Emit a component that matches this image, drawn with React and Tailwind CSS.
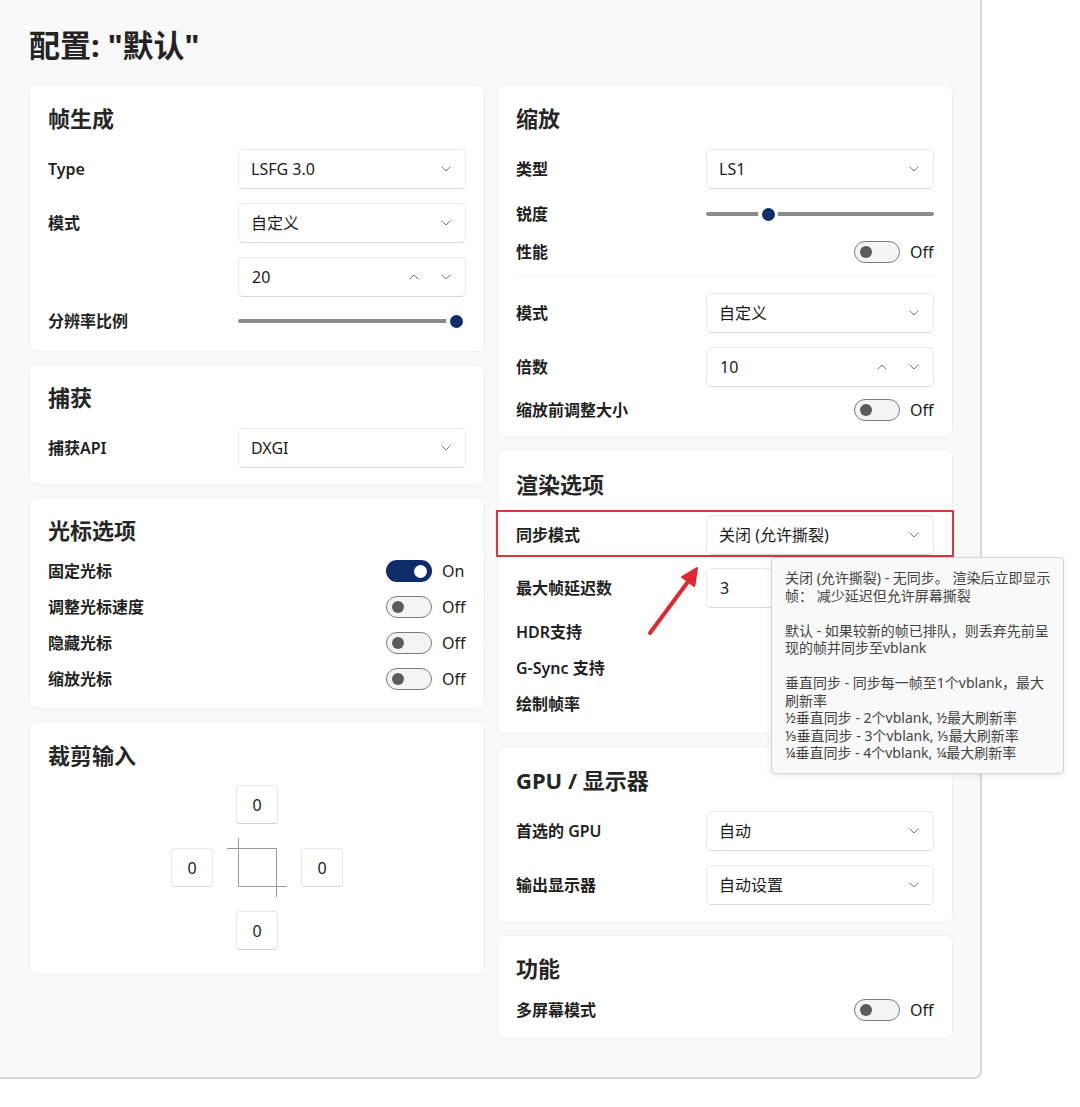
import React from "react";

function Chevron({ up }) {
  return (
    <svg width="10" height="6" viewBox="0 0 10 6" fill="none" stroke="#7a7a7a" strokeWidth="1" strokeLinecap="round" strokeLinejoin="round">
      <path d={up ? "M1 5 5 1l4 4" : "M1 1l4 4 4-4"} />
    </svg>
  );
}

function Combo({ value }) {
  return (
    <div className="flex h-[40px] w-[228px] items-center justify-between rounded-[5px] border border-[#e9e9e9] border-b-[#d6d6d6] bg-white pl-[12px] pr-[14px] text-[16px] text-[#1b1b1b]">
      <span>{value}</span>
      <Chevron />
    </div>
  );
}

function NumberBox({ value }) {
  return (
    <div className="flex h-[40px] w-[228px] items-center justify-between rounded-[5px] border border-[#e9e9e9] border-b-[#d6d6d6] bg-white pl-[13px] pr-[14px] text-[16px] text-[#1b1b1b]">
      <span>{value}</span>
      <div className="flex items-center gap-[22px]">
        <Chevron up />
        <Chevron />
      </div>
    </div>
  );
}

function Slider({ knob }) {
  return (
    <div className="relative h-[24px] w-[228px]">
      <div className="absolute left-0 right-0 top-[10px] h-[4px] rounded-full bg-[#8b8b8b]" />
      <div className={`absolute top-[2px] flex h-[20px] w-[20px] items-center justify-center rounded-full bg-white ${knob}`}>
        <div className="h-[13px] w-[13px] rounded-full bg-[#0f2d6b]" />
      </div>
    </div>
  );
}

function Toggle({ on }) {
  return (
    <div className="flex items-center">
      {on ? (
        <div className="flex h-[22px] w-[46px] items-center justify-end rounded-full bg-[#0f2d6b] pr-[5px]">
          <div className="h-[13px] w-[13px] rounded-full bg-white" />
        </div>
      ) : (
        <div className="flex h-[22px] w-[46px] items-center rounded-full border border-[#7c7c7c] bg-[#f4f4f4] pl-[5px]">
          <div className="h-[12px] w-[12px] rounded-full bg-[#5b5b5b]" />
        </div>
      )}
      <span className="ml-[10px] w-[24px] text-[16px] text-[#1b1b1b]">{on ? "On" : "Off"}</span>
    </div>
  );
}

function Row({ label, className, children }) {
  return (
    <div className={`flex items-center justify-between ${className}`}>
      <span className="text-[16px] font-semibold text-[#1f1f1f]">{label}</span>
      {children}
    </div>
  );
}

function Card({ title, className, children }) {
  return (
    <div className={`relative rounded-[8px] border border-[#f1f1f1] bg-white px-[18px] ${className}`}>
      <h2 className="h-[32px] text-[22px] font-bold leading-[32px] text-[#262626]">{title}</h2>
      {children}
    </div>
  );
}

function CropIcon() {
  return (
    <svg width="42" height="39" viewBox="0 0 42 39" className="overflow-visible" fill="none" stroke="#9a9a9a" strokeWidth="1">
      <path d="M-9 0.5H40.5V49" />
      <path d="M2.5 -10V38.5H51" />
    </svg>
  );
}

function CropInput() {
  return (
    <div className="flex h-[39px] w-[42px] items-center justify-center rounded-[4px] border border-[#e6e6e6] border-b-[#d3d3d3] bg-white text-[16px] text-[#1b1b1b]">
      0
    </div>
  );
}

const tipLines = [
  "关闭 (允许撕裂) - 无同步。 渲染后立即显示",
  "帧： 减少延迟但允许屏幕撕裂",
  "",
  "默认 - 如果较新的帧已排队，则丢弃先前呈",
  "现的帧并同步至vblank",
  "",
  "垂直同步 - 同步每一帧至1个vblank，最大",
  "刷新率",
  "½垂直同步 - 2个vblank, ½最大刷新率",
  "⅓垂直同步 - 3个vblank, ⅓最大刷新率",
  "¼垂直同步 - 4个vblank, ¼最大刷新率",
];

export default function App() {
  return (
    <div className="h-[1107px] w-[1080px] overflow-hidden bg-white font-['Noto_Sans','Noto_Sans_CJK_SC',sans-serif] text-[#1b1b1b]">
      <div className="h-[1079px] w-[982px] rounded-br-[8px] border-b-2 border-r-2 border-[#d7d7d7] bg-[#f9f9f9] pl-[29px]">
        <h1 className="h-[84px] pl-[-1px] pt-[24px] text-[31px] font-bold leading-[42px] text-[#232323]">配置: "默认"</h1>

        <div className="flex gap-[12px]">
          {/* left column */}
          <div className="flex w-[456px] flex-col gap-[12px]">
            <Card title="帧生成" className="pb-[15px] pt-[17px]">
              <div className="mt-[15px] flex flex-col gap-[14px]">
                <Row label="Type" className="h-[40px]">
                  <Combo value="LSFG 3.0" />
                </Row>
                <Row label="模式" className="h-[40px]">
                  <Combo value="自定义" />
                </Row>
                <Row label="" className="h-[40px]">
                  <NumberBox value="20" />
                </Row>
              </div>
              <Row label="分辨率比例" className="mt-[9px] h-[30px]">
                <Slider knob="left-[208px]" />
              </Row>
            </Card>

            <Card title="捕获" className="pb-[16px] pt-[16px]">
              <Row label="捕获API" className="mt-[15px] h-[40px]">
                <Combo value="DXGI" />
              </Row>
            </Card>

            <Card title="光标选项" className="pb-[15px] pt-[16px]">
              <div className="mt-[11px] flex flex-col gap-[8px]">
                <Row label="固定光标" className="h-[28px]">
                  <Toggle on />
                </Row>
                <Row label="调整光标速度" className="h-[28px]">
                  <Toggle />
                </Row>
                <Row label="隐藏光标" className="h-[28px]">
                  <Toggle />
                </Row>
                <Row label="缩放光标" className="h-[28px]">
                  <Toggle />
                </Row>
              </div>
            </Card>

            <Card title="裁剪输入" className="pb-[24px] pt-[17px]">
              <div className="mt-[14px] grid grid-cols-[42px_42px_42px] justify-center gap-x-[23px] gap-y-[24px]">
                <div />
                <CropInput />
                <div />
                <CropInput />
                <CropIcon />
                <CropInput />
                <div />
                <CropInput />
                <div />
              </div>
            </Card>
          </div>

          {/* right column */}
          <div className="flex w-[456px] flex-col gap-[12px]">
            <Card title="缩放" className="pb-[12px] pt-[17px]">
              <Row label="类型" className="mt-[15px] h-[40px]">
                <Combo value="LS1" />
              </Row>
              <Row label="锐度" className="mt-[13px] h-[24px]">
                <Slider knob="left-[52px]" />
              </Row>
              <Row label="性能" className="mt-[12px] h-[28px]">
                <Toggle />
              </Row>
              <div className="mt-[10px] h-px bg-[#f0f0f0]" />
              <Row label="模式" className="mt-[16px] h-[40px]">
                <Combo value="自定义" />
              </Row>
              <Row label="倍数" className="mt-[14px] h-[40px]">
                <NumberBox value="10" />
              </Row>
              <Row label="缩放前调整大小" className="mt-[9px] h-[28px]">
                <Toggle />
              </Row>
            </Card>

            <Card title="渲染选项" className="pb-[15px] pt-[18px]">
              <Row label="同步模式" className="mt-[15px] h-[40px]">
                <Combo value="关闭 (允许撕裂)" />
              </Row>
              <Row label="最大帧延迟数" className="mt-[13px] h-[40px]">
                <NumberBox value="3" />
              </Row>
              {/* the toggles of these rows sit under the tooltip */}
              <Row label="HDR支持" className="mt-[10px] h-[28px]" />
              <Row label="G-Sync 支持" className="mt-[8px] h-[28px]" />
              <Row label="绘制帧率" className="mt-[8px] h-[28px]" />

              {/* annotation */}
              <div className="pointer-events-none absolute left-[-2px] right-[-2px] top-[60px] h-[47px] border-2 border-[#d9363e]" />
              <svg className="absolute left-[140px] top-[108px]" width="72" height="90" viewBox="0 0 72 90">
                <path d="M12 75 52 21" stroke="#e0262e" strokeWidth="4" strokeLinecap="round" />
                <path d="M59 10 56.3 28 44 19Z" fill="#e0262e" stroke="#e0262e" strokeWidth="2" strokeLinejoin="round" />
              </svg>

              {/* tooltip */}
              <div className="absolute left-[273px] top-[107px] z-10 h-[217px] w-[293px] rounded-[4px] border border-[#d4d4d4] bg-[#f9f9f9] px-[13px] pt-[11px] text-[14px] leading-[17.5px] text-[#444] shadow-[0_2px_6px_rgba(0,0,0,0.08)]">
                {tipLines.map((line, i) => (
                  <div key={i} className="h-[17.5px] whitespace-nowrap">
                    {line}
                  </div>
                ))}
              </div>
            </Card>

            <Card title="GPU / 显示器" className="pb-[17px] pt-[17px]">
              <Row label="首选的 GPU" className="mt-[15px] h-[40px]">
                <Combo value="自动" />
              </Row>
              <Row label="输出显示器" className="mt-[14px] h-[40px]">
                <Combo value="自动设置" />
              </Row>
            </Card>

            <Card title="功能" className="pb-[14px] pt-[16px]">
              <Row label="多屏幕模式" className="mt-[12px] h-[28px]">
                <Toggle />
              </Row>
            </Card>
          </div>
        </div>
      </div>
    </div>
  );
}
